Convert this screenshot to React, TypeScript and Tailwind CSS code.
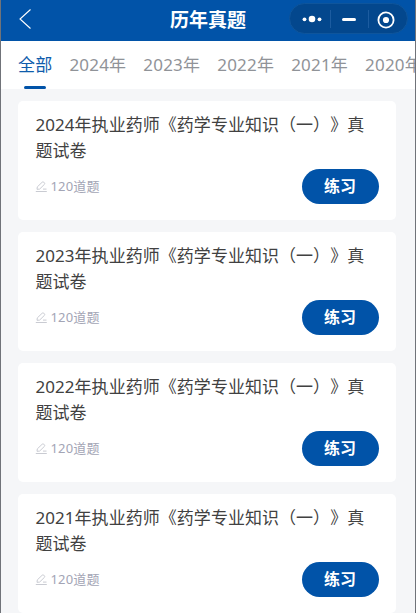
import { useState } from 'react';
import clsx from 'clsx';

const TABS = ['全部', '2024年', '2023年', '2022年', '2021年', '2020年'];

const PAPERS = [
  { year: 2024, count: 120 },
  { year: 2023, count: 120 },
  { year: 2022, count: 120 },
  { year: 2021, count: 120 },
];

function Header() {
  return (
    <header className="flex h-[41px] shrink-0 items-start bg-[#0153a8] text-white">
      <button className="ml-[17px] mt-[8px] w-[114px]" aria-label="返回">
        <svg width="14" height="22" viewBox="0 0 14 22" fill="none" stroke="currentColor" strokeWidth="1.1">
          <path d="M12.500 1.500 2 11l10.500 9.500" />
        </svg>
      </button>
      <h1 className="w-[152px] text-center text-[19px] leading-[40px] font-bold">历年真题</h1>
      <Capsule />
    </header>
  );
}

function Capsule() {
  return (
    <div className="ml-[5px] mt-[3px] flex h-[31px] w-[119px] items-center rounded-full border border-[#0e559c] bg-[#03478d]">
      <svg width="117" height="29" viewBox="0 0 117 29" fill="none">
        <g fill="#fff">
          <circle cx="14.500" cy="15.300" r="1.900" />
          <circle cx="22" cy="15" r="3.300" />
          <circle cx="29.500" cy="15.300" r="1.900" />
          <rect x="52" y="14" width="14" height="3" rx="1.500" />
          <circle cx="96" cy="16" r="3.100" />
        </g>
        <path d="M40.500 6v18M78.500 6v18" stroke="#1c5ca0" />
        <circle cx="96" cy="16" r="7.600" stroke="#fff" strokeWidth="1.800" />
      </svg>
    </div>
  );
}

function PenIcon() {
  return (
    <svg width="13" height="12" viewBox="0 0 13 12" fill="none" stroke="#c3c5cd" strokeWidth="0.9">
      <path d="M2 8.300 2.300 5.900 7.200 1.200q.8-.7 1.600 0l.6.6q.7.8 0 1.600L4.600 8.100zM.8 10.500h11M8 8.100h3.500" />
    </svg>
  );
}

function PaperCard({ year, count }: { year: number; count: number }) {
  return (
    <div className="h-[119px] shrink-0 rounded-[5px] bg-white pt-[11px] pr-[17px] pl-[17px]">
      <h2 className="w-[334px] pl-[0.500px] text-[17px] leading-[26px] tracking-[0.04px] text-[#414141] [text-spacing-trim:space-all]">
        {year}年执业药师《药学专业知识（一）》真题试卷
      </h2>
      <div className="mt-[5px] flex h-[35px] items-center justify-between">
        <div className="flex items-center gap-[2.500px] text-[13px] tracking-[0.15px] text-[#a3a5b5]">
          <PenIcon />
          <span>{count}道题</span>
        </div>
        <button className="h-[35px] w-[77px] rounded-full bg-[#0153a8] pr-px pb-px text-[16px] font-bold text-white">练习</button>
      </div>
    </div>
  );
}

export default function App() {
  const [active, setActive] = useState(TABS[0]);

  return (
    <div className="flex h-[613px] w-[416px] flex-col overflow-hidden border-x border-[#707379] bg-[#f5f6f8] font-['Noto_Sans','Noto_Sans_CJK_SC',sans-serif]">
      <Header />
      <nav className="flex h-[48px] shrink-0 gap-[17px] overflow-hidden bg-white pl-[17px]">
        {TABS.map((tab) => (
          <button
            key={tab}
            onClick={() => setActive(tab)}
            className={clsx(
              'flex shrink-0 flex-col items-center text-[17px]',
              active === tab ? 'text-[#0f5cac]' : 'text-[#909398]',
            )}
          >
            <span className="h-[45px] leading-[48px] tracking-[0.2px]">{tab}</span>
            {active === tab && <span className="h-[3px] w-[22px] rounded-full bg-[#0153a8]" />}
          </button>
        ))}
      </nav>
      <main className="flex flex-col gap-[12px] pt-[12px] pr-[19px] pl-[17px]">
        {PAPERS.map((paper) => (
          <PaperCard key={paper.year} year={paper.year} count={paper.count} />
        ))}
      </main>
    </div>
  );
}
